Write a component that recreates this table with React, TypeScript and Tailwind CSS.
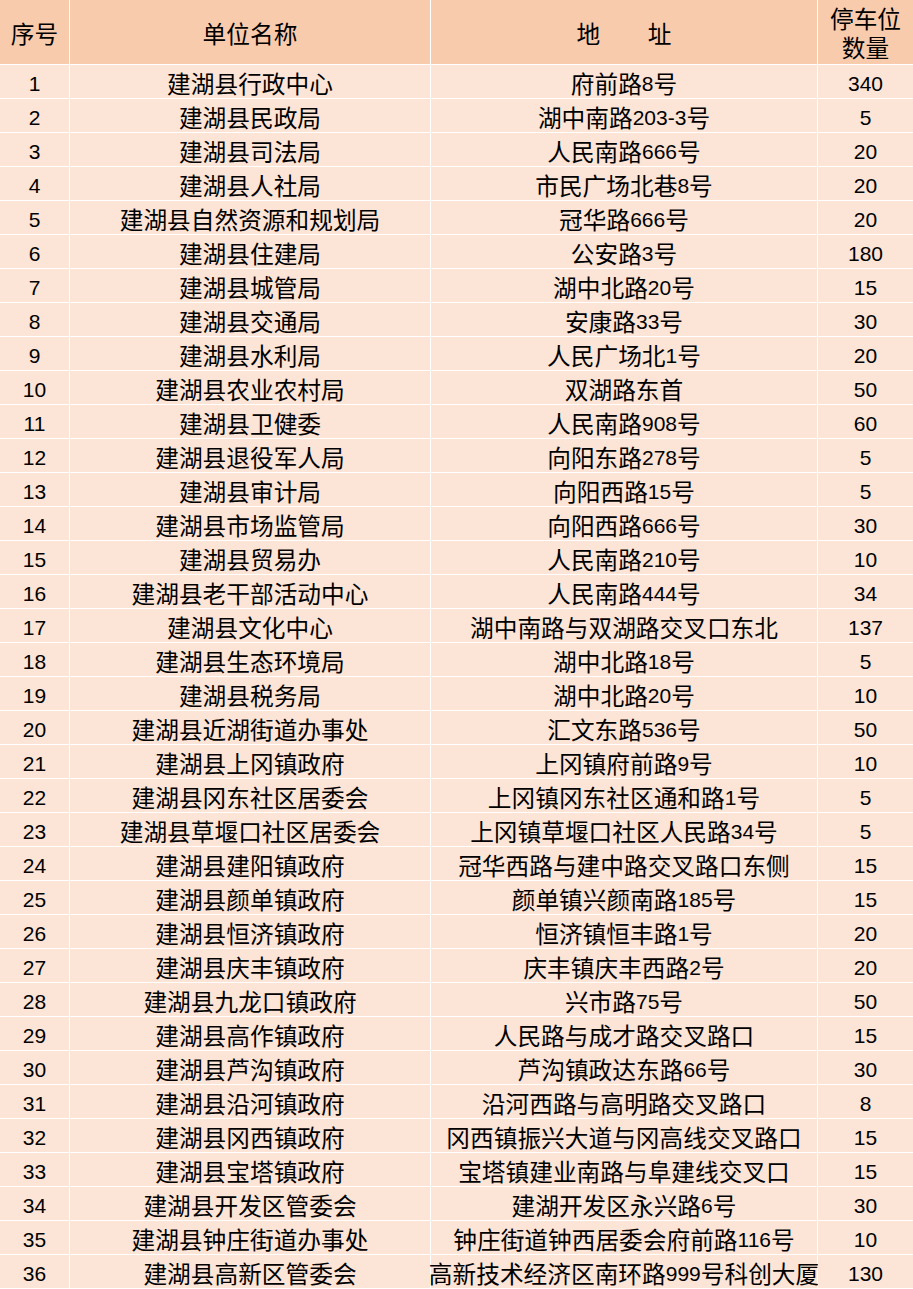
import React from 'react';

// [序号, 单位名称, 地址, 停车位数量]
const rows: [number, string, string, number][] = [
  [1, '建湖县行政中心', '府前路8号', 340],
  [2, '建湖县民政局', '湖中南路203-3号', 5],
  [3, '建湖县司法局', '人民南路666号', 20],
  [4, '建湖县人社局', '市民广场北巷8号', 20],
  [5, '建湖县自然资源和规划局', '冠华路666号', 20],
  [6, '建湖县住建局', '公安路3号', 180],
  [7, '建湖县城管局', '湖中北路20号', 15],
  [8, '建湖县交通局', '安康路33号', 30],
  [9, '建湖县水利局', '人民广场北1号', 20],
  [10, '建湖县农业农村局', '双湖路东首', 50],
  [11, '建湖县卫健委', '人民南路908号', 60],
  [12, '建湖县退役军人局', '向阳东路278号', 5],
  [13, '建湖县审计局', '向阳西路15号', 5],
  [14, '建湖县市场监管局', '向阳西路666号', 30],
  [15, '建湖县贸易办', '人民南路210号', 10],
  [16, '建湖县老干部活动中心', '人民南路444号', 34],
  [17, '建湖县文化中心', '湖中南路与双湖路交叉口东北', 137],
  [18, '建湖县生态环境局', '湖中北路18号', 5],
  [19, '建湖县税务局', '湖中北路20号', 10],
  [20, '建湖县近湖街道办事处', '汇文东路536号', 50],
  [21, '建湖县上冈镇政府', '上冈镇府前路9号', 10],
  [22, '建湖县冈东社区居委会', '上冈镇冈东社区通和路1号', 5],
  [23, '建湖县草堰口社区居委会', '上冈镇草堰口社区人民路34号', 5],
  [24, '建湖县建阳镇政府', '冠华西路与建中路交叉路口东侧', 15],
  [25, '建湖县颜单镇政府', '颜单镇兴颜南路185号', 15],
  [26, '建湖县恒济镇政府', '恒济镇恒丰路1号', 20],
  [27, '建湖县庆丰镇政府', '庆丰镇庆丰西路2号', 20],
  [28, '建湖县九龙口镇政府', '兴市路75号', 50],
  [29, '建湖县高作镇政府', '人民路与成才路交叉路口', 15],
  [30, '建湖县芦沟镇政府', '芦沟镇政达东路66号', 30],
  [31, '建湖县沿河镇政府', '沿河西路与高明路交叉路口', 8],
  [32, '建湖县冈西镇政府', '冈西镇振兴大道与冈高线交叉路口', 15],
  [33, '建湖县宝塔镇政府', '宝塔镇建业南路与阜建线交叉口', 15],
  [34, '建湖县开发区管委会', '建湖开发区永兴路6号', 30],
  [35, '建湖县钟庄街道办事处', '钟庄街道钟西居委会府前路116号', 10],
  [36, '建湖县高新区管委会', '高新技术经济区南环路999号科创大厦', 130],
];

// digits & dashes are set in a slightly smaller latin face, like the spreadsheet
const Mixed: React.FC<{ text: string }> = ({ text }) => (
  <>
    {text.split(/([0-9\-]+)/).map((part, i) =>
      /^[0-9\-]+$/.test(part) ? (
        <span key={i} className="font-['Liberation_Sans'] text-[21px]">
          {part}
        </span>
      ) : (
        <span key={i}>{part}</span>
      )
    )}
  </>
);

const cell = 'flex items-center justify-center whitespace-nowrap pt-[4px]';

export default function App() {
  return (
    <div className="w-[913px] h-[1289px] bg-white font-['Noto_Sans_CJK_SC',sans-serif] text-[23.7px] leading-none text-black">
      <div className="grid grid-cols-[69px_360px_386px_95px] gap-px">
        <div className={`${cell} h-[64px] bg-[#f8cbad]`}>序号</div>
        <div className={`${cell} h-[64px] bg-[#f8cbad]`}>单位名称</div>
        <div className={`${cell} h-[64px] bg-[#f8cbad]`}>地　　址</div>
        <div className="flex flex-col items-center justify-center h-[64px] bg-[#f8cbad] pt-[2px] leading-[29px]">
          <span>停车位</span>
          <span>数量</span>
        </div>

        {rows.map(([no, name, addr, count]) => (
          <React.Fragment key={no}>
            <div className={`${cell} h-[33px] bg-[#fce4d6]`}>
              <Mixed text={String(no)} />
            </div>
            <div className={`${cell} h-[33px] bg-[#fce4d6]`}>
              <Mixed text={name} />
            </div>
            <div className={`${cell} h-[33px] bg-[#fce4d6]`}>
              <Mixed text={addr} />
            </div>
            <div className={`${cell} h-[33px] bg-[#fce4d6]`}>
              <Mixed text={String(count)} />
            </div>
          </React.Fragment>
        ))}
      </div>
    </div>
  );
}
